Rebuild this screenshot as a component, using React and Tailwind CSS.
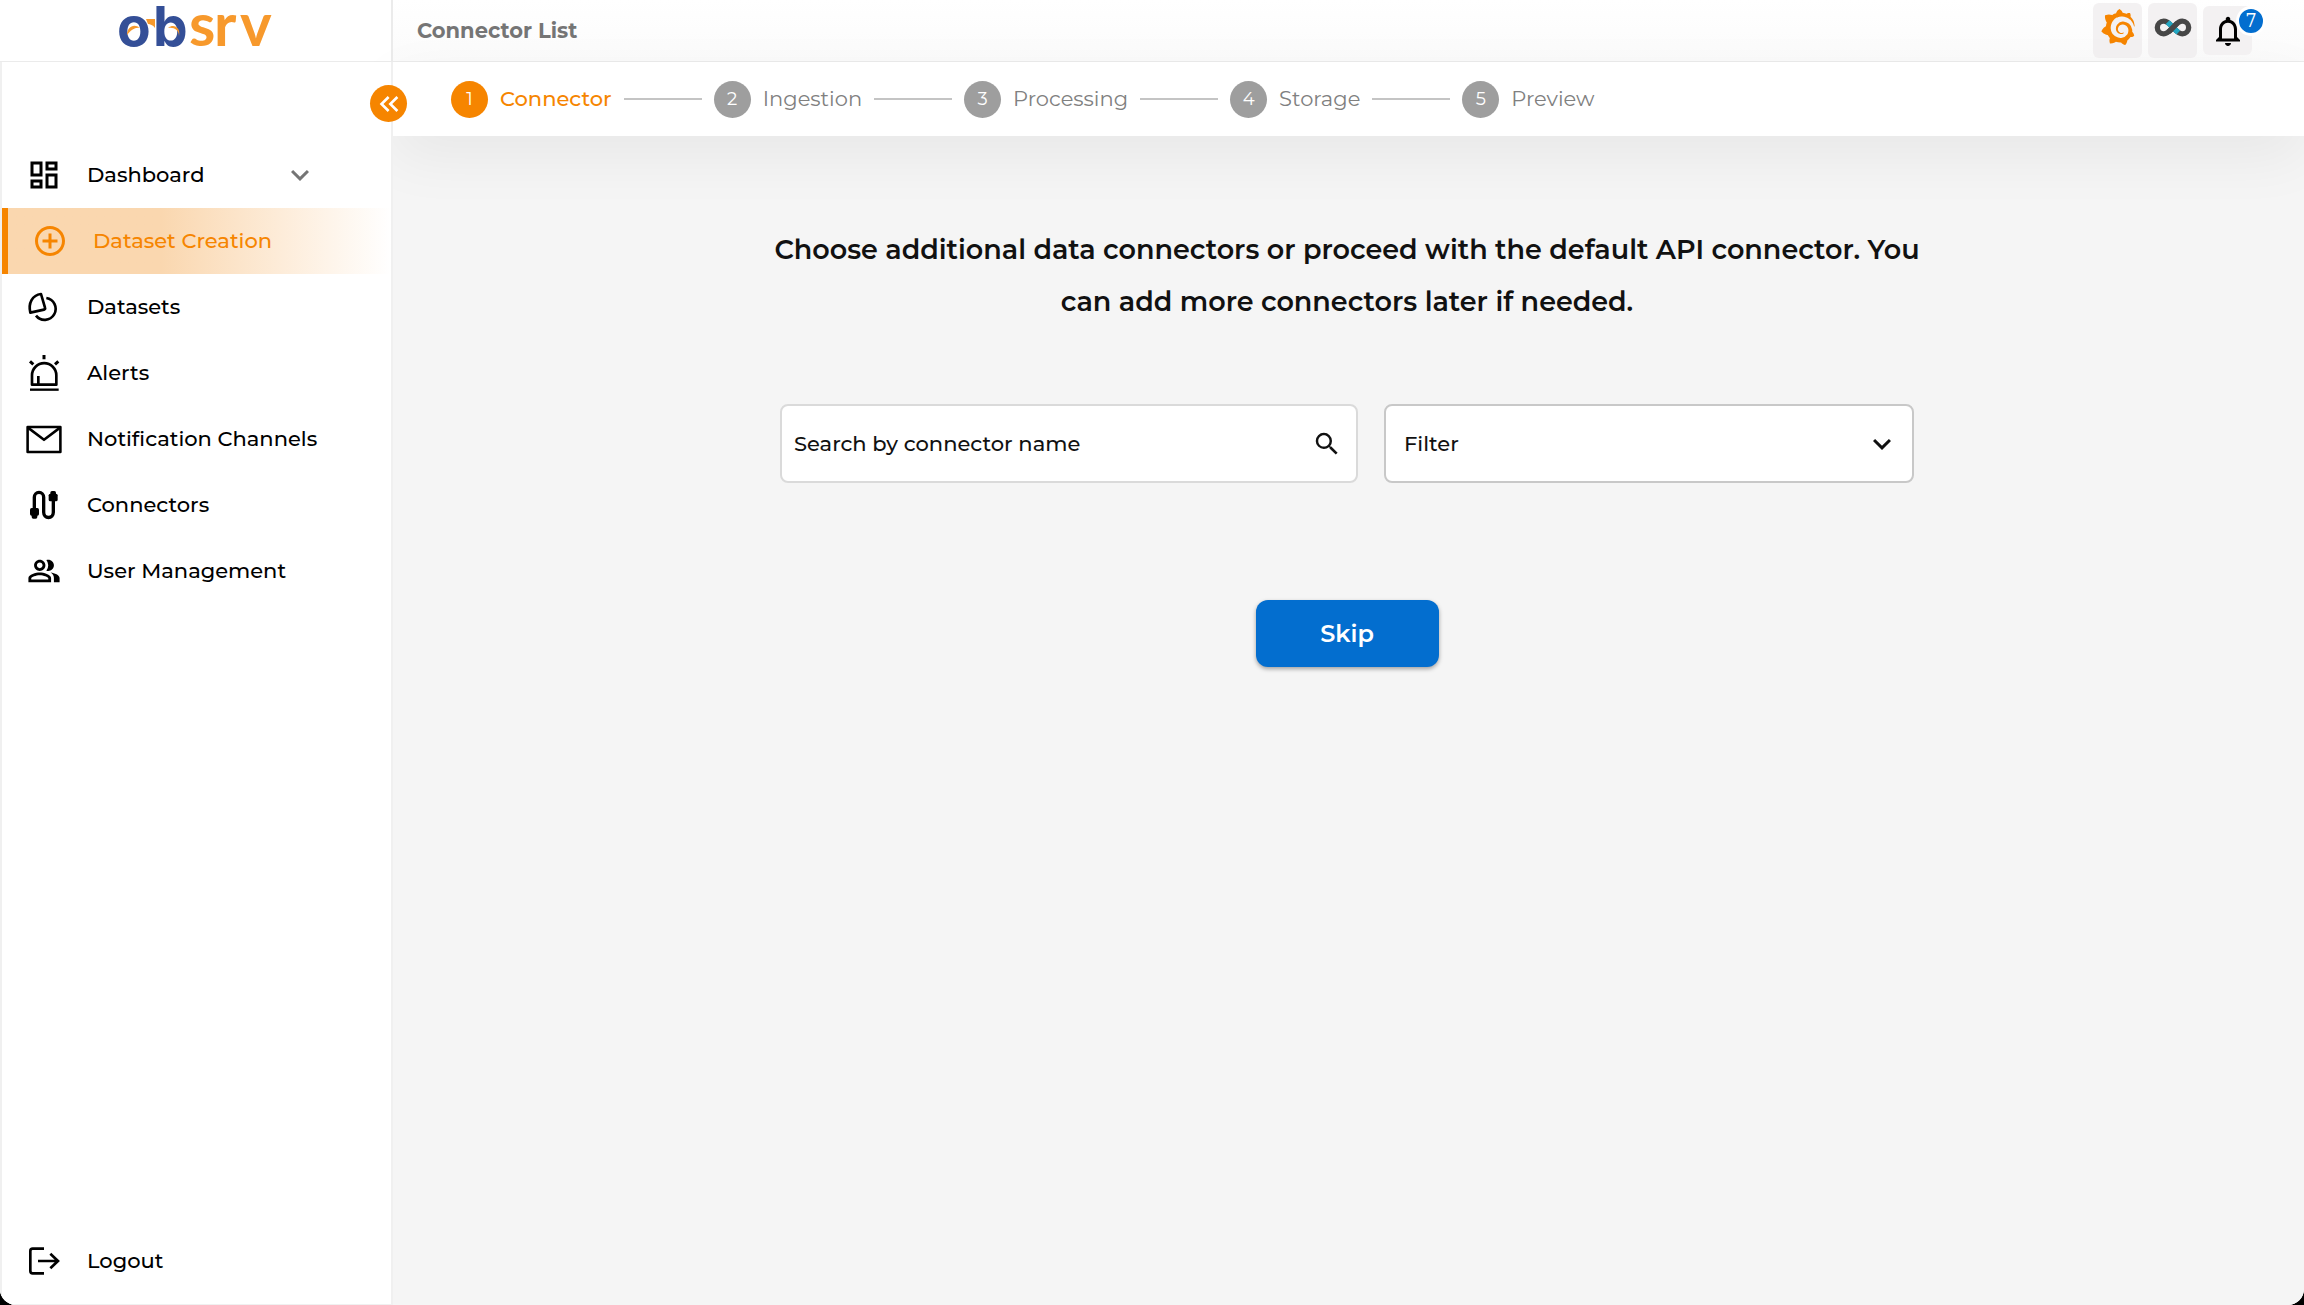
import { useState } from "react";
import {
  MdAddCircleOutline,
  MdExpandMore,
  MdKeyboardDoubleArrowLeft,
  MdNotificationsNone,
  MdOutlineDashboard,
  MdOutlinePeopleAlt,
  MdSearch,
} from "react-icons/md";
import { SiGrafana } from "react-icons/si";

function DatasetsIcon() {
  return (
    <svg viewBox="0 0 102 96" className="w-[34px] h-8" fill="none" stroke="currentColor" strokeWidth="8" strokeLinejoin="round">
      <path d="M10 65C3 37 16 12 42 9l12 41c1 3 0 5-3 6z" />
      <path d="M58 21a33 33 0 1 1-31 53" />
    </svg>
  );
}

function AlertsIcon() {
  return (
    <svg viewBox="0 0 96 114" className="w-8 h-[38px]" fill="none" stroke="currentColor" strokeWidth="8">
      <path d="M12 92V64a36 36 0 0 1 73 0v28z" strokeLinejoin="round" />
      <path d="M31 66v24" />
      <path d="M6 107h86" strokeWidth="7" />
      <path d="M48 3v13M6 22l10 9M91 22l-10 9" strokeWidth="9" />
    </svg>
  );
}

function MailIcon() {
  return (
    <svg viewBox="0 0 112 88" className="w-[37px] h-[29px]" fill="none" stroke="currentColor" strokeWidth="8" strokeLinejoin="round">
      <path d="M5 5h102v78H5z" />
      <path d="M6 7l50 38 50-38" />
    </svg>
  );
}

function ConnectorsIcon() {
  return (
    <svg viewBox="0 0 90 90" className="w-[30px] h-[30px]" fill="none" stroke="currentColor" strokeWidth="10">
      <path d="M16 58V22a14 15 0 0 1 28 0v45a14 15 0 0 0 29 0V30" />
      <rect x="3" y="54" width="27" height="23" rx="5" fill="currentColor" stroke="none" />
      <rect x="8" y="66" width="17" height="20" rx="5" fill="currentColor" stroke="none" />
      <rect x="59" y="11" width="27" height="23" rx="5" fill="currentColor" stroke="none" />
      <rect x="64" y="3" width="17" height="20" rx="5" fill="currentColor" stroke="none" />
    </svg>
  );
}

function LogoutIcon() {
  return (
    <svg viewBox="0 0 96 90" className="w-8 h-[30px]" fill="none" stroke="currentColor" strokeWidth="8">
      <path d="M48 8H14q-7 0-7 7v60q0 7 7 7h34" />
      <path d="M30 45h60M67 23l23 22-23 22" />
    </svg>
  );
}

function InfinityIcon() {
  return (
    <svg viewBox="0 0 114 62" className="w-[38px] h-[21px]" fill="none" strokeWidth="16">
      <path
        d="M57 31C48 22 42 12 29 12a19 19 0 0 0 0 38c13 0 19-10 28-19s15-19 28-19a19 19 0 0 1 0 38c-13 0-19-10-28-19"
        stroke="#474747"
      />
      <path d="M41 15l13 13M60 34l13 12" stroke="#22a7c3" />
      <path d="M44 44l13-13 13-13" stroke="#474747" />
    </svg>
  );
}

function Logo() {
  return (
    <svg viewBox="0 0 156 48" className="w-[156px] h-12 overflow-visible" role="img" aria-label="obsrv">
      <path d="M28 15h9v9c-2-3-5-4-7-4z" fill="#f7992c" />
      <text y="42" fontFamily="Inter, sans-serif" fontWeight="700" fontSize="55" fill="#344f97" x="-1 35">
        ob
      </text>
      <text y="42" fontFamily="Lato, sans-serif" fontWeight="700" fontSize="60" fill="#f7992c" x="71 96 122">
        srv
      </text>
      <path d="M9 31c0-8 7-12 13-7-5-1-9 2-13 7zM61 32c0-6-5-9-11-8 6-5 13 0 11 8z" fill="#f7992c" />
    </svg>
  );
}

const NAV_ITEMS = [
  { label: "Dashboard", icon: <MdOutlineDashboard className="w-9 h-9" />, expandable: true },
  { label: "Dataset Creation", icon: <MdAddCircleOutline className="w-9 h-9" />, active: true },
  { label: "Datasets", icon: <DatasetsIcon /> },
  { label: "Alerts", icon: <AlertsIcon /> },
  { label: "Notification Channels", icon: <MailIcon /> },
  { label: "Connectors", icon: <ConnectorsIcon /> },
  { label: "User Management", icon: <MdOutlinePeopleAlt className="w-[34px] h-[34px]" /> },
];

const STEPS = ["Connector", "Ingestion", "Processing", "Storage", "Preview"];

function NavItem({ label, icon, active, expandable }) {
  return (
    <a
      href="#"
      className={`flex items-center h-[66px] pl-6 pr-[73px] text-[21px] font-medium ${active ? "border-l-6 border-[#f68500] text-[#f68500] bg-linear-to-r from-[#fad7af] from-40% to-white" : "text-black"}`}
    >
      <span className="w-9 mr-[25px] flex justify-center shrink-0">{icon}</span>
      <span className="flex-1 whitespace-nowrap">{label}</span>
      {expandable && <MdExpandMore className="w-9 h-9 text-[#757575]" />}
    </a>
  );
}

function Sidebar() {
  return (
    <aside className="relative z-10 w-[393px] shrink-0 flex flex-col bg-white border-x-2 border-b border-[#f0f0f0]">
      <button
        type="button"
        aria-label="Collapse sidebar"
        className="absolute -right-4 top-[23px] w-[37px] h-[37px] rounded-full bg-[#f68500] text-white flex items-center justify-center"
      >
        <MdKeyboardDoubleArrowLeft className="w-8 h-8" />
      </button>
      <nav className="pt-20 flex-1">
        {NAV_ITEMS.map((item) => (
          <NavItem key={item.label} {...item} />
        ))}
      </nav>
      <div className="pb-[10px]">
        <NavItem label="Logout" icon={<LogoutIcon />} />
      </div>
    </aside>
  );
}

function Header() {
  return (
    <header className="flex h-[62px] border-b border-[#ebebeb]">
      <div className="w-[393px] shrink-0 flex justify-center pt-1 border-r-2 border-[#ebebeb]">
        <Logo />
      </div>
      <div className="flex-1 flex justify-between pl-6 pr-[52px] bg-linear-to-b from-white to-[#fbfbfb]">
        <h1 className="self-center text-[21px] font-bold text-[#757575]">Connector List</h1>
        <div className="flex items-start gap-[6px] pt-[3px]">
          <button type="button" aria-label="Grafana" className="w-[49px] h-[55px] rounded-md bg-[#f3f1f2] flex justify-center pt-[6px]">
            <SiGrafana className="w-9 h-9 text-[#f68500]" />
          </button>
          <button type="button" aria-label="Superset" className="w-[49px] h-[55px] rounded-md bg-[#f3f1f2] flex justify-center pt-[14px]">
            <InfinityIcon />
          </button>
          <button type="button" aria-label="Notifications" className="relative mt-[3px] w-[49px] h-[49px] rounded-md bg-[#f3f1f2] flex items-center justify-center">
            <MdNotificationsNone className="w-9 h-9" />
            <span className="absolute -right-[14px] top-0 w-[30px] h-[30px] rounded-full border-3 border-white bg-[#036ecf] text-white text-[18px] leading-6 font-['DejaVu_Serif',serif]">
              7
            </span>
          </button>
        </div>
      </div>
    </header>
  );
}

function Stepper() {
  return (
    <ol className="flex items-center gap-3 h-[74px] pl-[58px] bg-white shadow-[0_20px_60px_rgba(0,0,0,0.06)]">
      {STEPS.map((step, i) => (
        <li key={step} className="flex items-center gap-3">
          {i > 0 && <span className="w-[78px] h-[2px] bg-[#c4c4c4]" />}
          <span className={`w-[37px] h-[37px] rounded-full flex items-center justify-center text-[18px] text-white ${i === 0 ? "bg-[#f68500]" : "bg-[#9e9e9e]"}`}>
            {i + 1}
          </span>
          <span className={`text-[21px] ${i === 0 ? "font-medium text-[#f68500]" : "text-[#808080]"}`}>{step}</span>
        </li>
      ))}
    </ol>
  );
}

export default function App() {
  const [search, setSearch] = useState("");

  return (
    <div className="min-h-screen flex bg-black font-[Montserrat,Inter,sans-serif]">
      <div className="flex-1 flex flex-col bg-white rounded-b-2xl overflow-hidden">
        <Header />
        <div className="flex-1 flex">
          <Sidebar />
          <div className="flex-1 bg-[#f5f5f5]">
            <Stepper />
            <main className="max-w-[1163px] mx-auto pt-[88px] pr-[3px] flex flex-col items-center text-[#111]">
              <h2 className="w-full text-center text-[27px] leading-[52px] font-semibold">
                Choose additional data connectors or proceed with the default API connector. You can add more connectors later if needed.
              </h2>
              <div className="w-full px-[13px] mt-[76px] flex gap-[26px] text-[21px] font-medium">
                <label className="flex-1 h-[79px] flex items-center pl-3 pr-[14px] bg-white border-2 border-[#dadada] rounded-lg">
                  <input
                    type="text"
                    aria-label="Search by connector name"
                    placeholder="Search by connector name"
                    value={search}
                    onChange={(e) => setSearch(e.target.value)}
                    className="flex-1 outline-none placeholder:text-[#111]"
                  />
                  <MdSearch className="w-[30px] h-[30px]" />
                </label>
                <div className="relative w-[530px]">
                  <select
                    aria-label="Filter"
                    className="w-full h-[79px] pl-[18px] appearance-none bg-white border-2 border-[#c8c8c8] rounded-lg"
                  >
                    <option>Filter</option>
                  </select>
                  <MdExpandMore className="absolute right-[14px] top-[22px] w-9 h-9 pointer-events-none" />
                </div>
              </div>
              <button
                type="button"
                className="mt-[117px] w-[183px] h-[67px] rounded-xl bg-[#036ecf] text-white text-[24px] font-semibold shadow-[0_2px_4px_rgba(0,0,0,0.35)]"
              >
                Skip
              </button>
            </main>
          </div>
        </div>
      </div>
    </div>
  );
}
